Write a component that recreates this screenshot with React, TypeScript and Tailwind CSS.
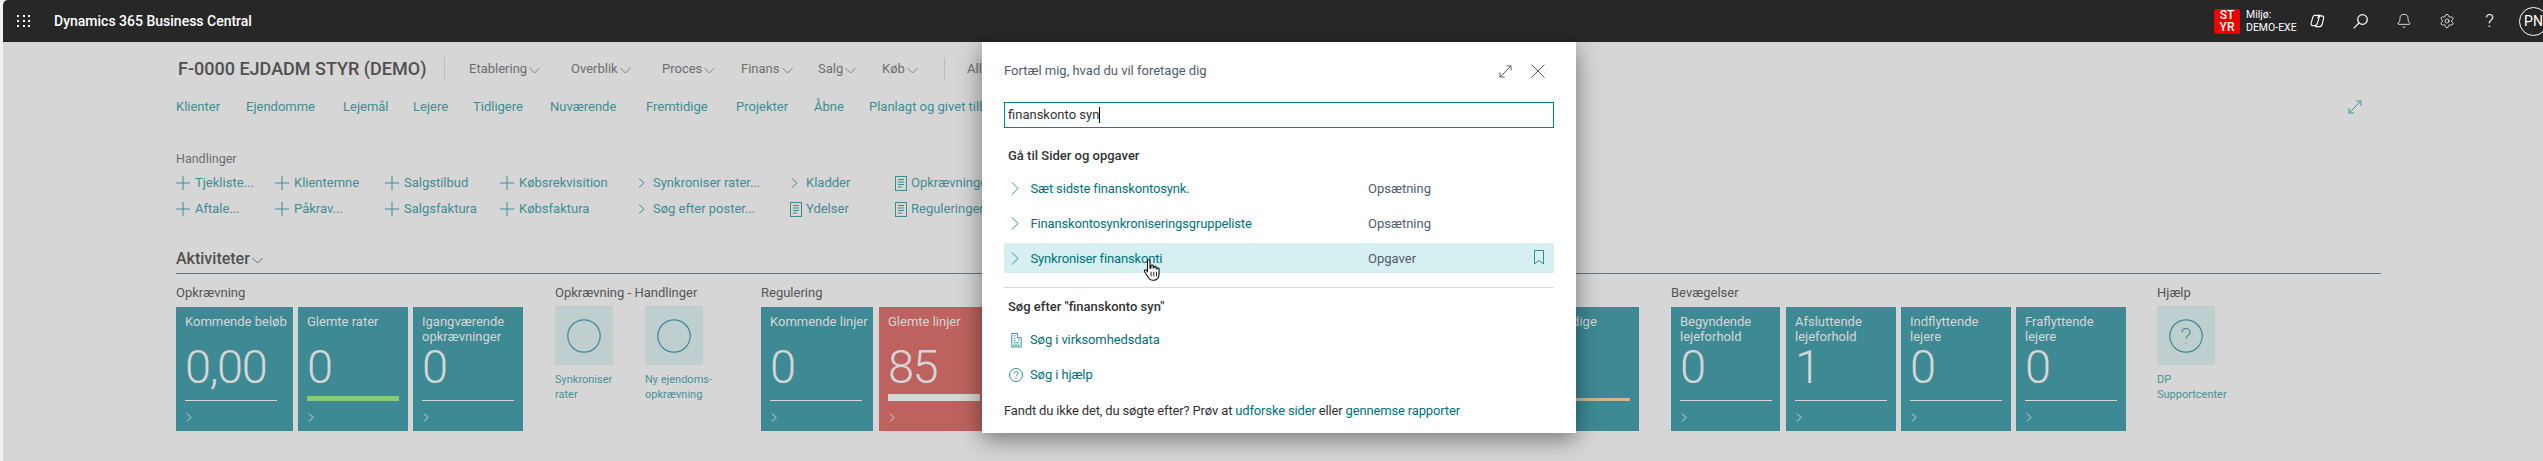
import type { ReactNode } from "react";
import { Bell, Settings } from "lucide-react";

function Chevron({ w = 7, h = 10, className = "" }: { w?: number; h?: number; className?: string }) {
  return (
    <svg width={w} height={h} viewBox={`0 0 ${w} ${h}`} fill="none" stroke="currentColor" strokeWidth="1" className={`shrink-0 ${className}`}>
      <path d={`M1 .5 ${w - 1} ${h / 2} 1 ${h - 0.5}`} />
    </svg>
  );
}

function Caret() {
  return (
    <svg width="11" height="7" viewBox="0 0 11 7" fill="none" stroke="currentColor" strokeWidth="0.8" className="ml-[2px] shrink-0 mt-[2px]">
      <path d="M.5 1 5.500 6l5-5" />
    </svg>
  );
}

function PlusIcon() {
  return (
    <svg width="14" height="14" viewBox="0 0 14 14" stroke="currentColor" strokeWidth="1" className="shrink-0 mr-[5px]">
      <path d="M0 7h14M7 0v14" />
    </svg>
  );
}

function DocIcon() {
  return (
    <svg width="12" height="15" viewBox="0 0 12 15" fill="none" stroke="currentColor" strokeWidth="1" className="shrink-0">
      <rect x=".5" y=".5" width="11" height="14" />
      <path d="M3 3.500h6M3 6h6M3 8.500h6M3 11h4" />
    </svg>
  );
}

function ExpandIcon({ size = 14 }: { size?: number }) {
  return (
    <svg width={size} height={size} viewBox="0 0 14 14" fill="none" stroke="currentColor" strokeWidth="1">
      <path d="M1 13 13 1M8 1h5v5M1 8v5h5" />
    </svg>
  );
}

const navItems = [
  ["Etablering", "w-[102px]"],
  ["Overblik", "w-[91px]"],
  ["Proces", "w-[79px]"],
  ["Finans", "w-[77px]"],
  ["Salg", "w-[64px]"],
  ["Køb", "w-[62px]"],
];

const links = [
  ["Klienter", "w-[70px]"],
  ["Ejendomme", "w-[97px]"],
  ["Lejemål", "w-[70px]"],
  ["Lejere", "w-[60px]"],
  ["Tidligere", "w-[77px]"],
  ["Nuværende", "w-[96px]"],
  ["Fremtidige", "w-[90px]"],
  ["Projekter", "w-[78px]"],
  ["Åbne", "w-[55px]"],
  ["Planlagt og givet tilbud", "w-[180px]"],
];

type ActionKind = "plus" | "chevron" | "doc";
type Action = { kind: ActionKind; label: string };

const actions: { w: string; items: Action[] }[] = [
  { w: "w-[99px]", items: [{ kind: "plus", label: "Tjekliste..." }, { kind: "plus", label: "Aftale..." }] },
  { w: "w-[110px]", items: [{ kind: "plus", label: "Klientemne" }, { kind: "plus", label: "Påkrav..." }] },
  { w: "w-[115px]", items: [{ kind: "plus", label: "Salgstilbud" }, { kind: "plus", label: "Salgsfaktura" }] },
  { w: "w-[137px]", items: [{ kind: "plus", label: "Købsrekvisition" }, { kind: "plus", label: "Købsfaktura" }] },
  { w: "w-[153px]", items: [{ kind: "chevron", label: "Synkroniser rater..." }, { kind: "chevron", label: "Søg efter poster..." }] },
  { w: "w-[105px]", items: [{ kind: "chevron", label: "Kladder" }, { kind: "doc", label: "Ydelser" }] },
  { w: "w-[120px]", items: [{ kind: "doc", label: "Opkrævninger" }, { kind: "doc", label: "Reguleringer" }] },
];

function ActionIcon({ kind }: { kind: ActionKind }) {
  if (kind === "plus") return <PlusIcon />;
  if (kind === "chevron") return <Chevron className="ml-[1px] mr-[8px]" />;
  return <span className="mr-[4px] flex"><DocIcon /></span>;
}

type TileProps = {
  title: ReactNode;
  value: string;
  w: string;
  red?: boolean;
  bar?: "line" | "green" | "white" | "tan";
};

function Tile({ title, value, w, red, bar = "line" }: TileProps) {
  return (
    <div className={`${w} h-[124px] mt-[1px] pl-[9px] shrink-0 relative ${red ? "bg-[#bd625e]" : "bg-[#3e8a94]"} text-[#d6d6d6]`}>
      <div className="pt-[7px] text-[13px] leading-[15px] h-[36px] whitespace-nowrap">{title}</div>
      <div className="absolute left-[9px] top-[30px] text-[47px] leading-[60px] font-light tracking-[-1.5px]">{value}</div>
      <div className="absolute left-[9px] w-[92px] bottom-[30px]">
        {bar === "line" && <div className="h-[1px] bg-[#d6d6d6]" />}
        {bar === "green" && <div className="h-[5px] bg-[#8cc97d]" />}
        {bar === "white" && <div className="h-[7px] bg-[#d6d6d6]" />}
        {bar === "tan" && <div className="h-[3px] bg-[#c9bb8f]" />}
      </div>
      <Chevron w={6} h={9} className="absolute left-[10px] top-[106px]" />
    </div>
  );
}

function ActionTile({ label, help }: { label: ReactNode; help?: boolean }) {
  return (
    <div className="w-[58px] shrink-0">
      <div className="h-[59px] bg-[#bfcfd0] flex items-center justify-center text-[#3e8a94]">
        <svg width="34" height="34" viewBox="0 0 34 34" fill="none" stroke="currentColor" strokeWidth="1.200">
          <circle cx="17" cy="17" r="16.200" />
          {help && <path d="M13 13.500c0-2.400 1.800-4 4-4s4 1.600 4 3.800c0 3-4 3.200-4 6.400M17 23.500v1" />}
        </svg>
      </div>
      <div className="mt-[8px] text-[11px] leading-[14.500px] text-[#4a9198] w-[80px]">{label}</div>
    </div>
  );
}

function Group({ title, children, w }: { title: string; children: ReactNode; w: string }) {
  return (
    <div className={`${w} shrink-0`}>
      <div className="h-[32px] pt-[10px] text-[13px] leading-[18px] text-[#555555] whitespace-nowrap">{title}</div>
      {children}
    </div>
  );
}

function ResultRow({ label, category, active }: { label: string; category: string; active?: boolean }) {
  return (
    <div className={`h-[30px] flex items-center pl-[7px] mt-[5px] relative ${active ? "bg-[#d6eff1]" : ""}`}>
      <Chevron w={8} h={13} className="text-[#2f8b92] mr-[11.500px]" />
      <span className="w-[337.500px] text-[#00737a] text-[13px] tracking-[-0.15px] pt-[1px]">{label}</span>
      <span className="text-[13px] text-[#505c6d] pt-[1px]">{category}</span>
      {active && (
        <svg width="10" height="15" viewBox="0 0 10 15" fill="none" stroke="#2f8b92" strokeWidth="1" className="absolute right-[10px] top-[7px]">
          <path d="M.5.500h9v13.500l-4.500-3.500-4.500 3.500z" />
        </svg>
      )}
    </div>
  );
}

function Copilot() {
  return (
    <svg width="15" height="14" viewBox="0 0 16 15" fill="none" stroke="#fff" strokeWidth="1.200">
      <path d="M5 1.500h5.500L8 9.500C7.600 11 6.600 12.500 5 12.500H3C1.500 12.500.8 11.200 1.200 9.800L3 3.500C3.400 2.200 4 1.500 5 1.500z" />
      <path d="M8 4.500C8.400 3 9.400 2 11 2h1.500c1.600 0 2.400 1.300 2 2.800L13 11c-.4 1.500-1.300 2.500-2.800 2.500H5.500" />
    </svg>
  );
}

function SearchIcon() {
  return (
    <svg width="15" height="15" viewBox="0 0 15 15" fill="none" stroke="#fff" strokeWidth="1.200">
      <circle cx="9.500" cy="5.500" r="4.800" />
      <path d="M6 9 .7 14.300" />
    </svg>
  );
}

function HandCursor() {
  return (
    <svg width="20" height="24" viewBox="0 0 17 21" className="absolute left-[139px] top-[15px]">
      <path
        d="M4.500 1.500c.9 0 1.400.6 1.400 1.400v6l.8-.2V6.600c.8-.8 1.900-.4 2 .4v1.600l.7.1V7.600c.8-.7 1.800-.3 1.900.6v1.200l.7.1V8.900c.8-.5 1.700-.1 1.800.8V14c0 3.200-2 5.500-4.800 5.500H8C6.300 19.500 5.400 18.600 4.400 17L1.200 12c-.7-1.200.7-2.200 1.600-1.200l.9 1V2.900c0-.8.1-1.400.8-1.400z"
        fill="#fff"
        stroke="#111"
        strokeWidth="1"
      />
      <path d="M6.800 12v4M9.200 12v4M11.600 12v4" stroke="#111" strokeWidth=".8" />
    </svg>
  );
}

export default function App() {
  return (
    <div className="font-['Roboto','Liberation_Sans',sans-serif] relative w-[2543px] h-[461px] overflow-hidden bg-[#f2f2f2] pl-[3px]">
      {/* top bar */}
      <div className="h-[42px] bg-[#272727] rounded-tl-[5px] flex items-center text-white">
        <div className="w-[51px] pl-[14px]">
          <div className="grid grid-cols-3 w-[14px] gap-[3px]">
            {Array.from({ length: 9 }).map((_, i) => (
              <div key={i} className="w-[2px] h-[2px] bg-white" />
            ))}
          </div>
        </div>
        <div className="text-[14px] font-medium">Dynamics 365 Business Central</div>
        <div className="ml-auto flex items-center -mr-[5px]">
          <div className="w-[26px] h-[25px] bg-[#ee0000] rounded-[2px] text-[12px] leading-[12.500px] font-medium flex items-center justify-center text-center">
            ST
            <br />
            YR
          </div>
          <div className="ml-[6px] w-[50px] text-[10.500px] leading-[13.500px] whitespace-nowrap">
            Miljø:
            <br />
            DEMO-EXE
          </div>
          <div className="w-[43px] flex justify-center"><Copilot /></div>
          <div className="w-[43px] flex justify-center"><SearchIcon /></div>
          <div className="w-[43px] flex justify-center"><Bell size={16} strokeWidth={1.2} /></div>
          <div className="w-[43px] flex justify-center"><Settings size={16} strokeWidth={1.2} /></div>
          <div className="w-[43px] flex justify-center text-[19px] font-light">?</div>
          <div className="w-[29px] h-[29px] shrink-0 rounded-full border border-white flex items-center justify-center text-[14px] ml-[8px]">PN</div>
        </div>
      </div>

      {/* page */}
      <div className="h-[419px] bg-[#d6d6d6] pl-[173px] w-[2540px]">
        <div className="w-[2205px] h-[419px]">
          <div className="h-[54px] flex items-center">
            <div className="w-[269px] pl-[2px] h-[24px] leading-[24px] text-[18px] font-medium text-[#505050] border-r border-[#bbbbbb] whitespace-nowrap">
              F-0000 EJDADM STYR (DEMO)
            </div>
            <div className="flex items-center pl-[24px] h-[24px] text-[13px] text-[#6d6d6d]">
              {navItems.map(([name, w]) => (
                <div key={name} className={`${w} flex items-center`}>
                  {name}
                  <Caret />
                </div>
              ))}
              <div className="h-[22px] w-[1px] bg-[#bbbbbb]" />
              <div className="ml-[22px]">Alle</div>
            </div>
          </div>

          <div className="h-[20px] flex items-center mt-[1px] text-[13px] text-[#3f8d93]">
            {links.map(([name, w]) => (
              <div key={name} className={`${w} whitespace-nowrap`}>{name}</div>
            ))}
            <div className="ml-auto mr-[19px] text-[#4a9198]">
              <ExpandIcon />
            </div>
          </div>

          <div className="mt-[34px] text-[12.500px] leading-[16px] text-[#6d6d6d]">Handlinger</div>
          <div className="flex mt-[6px] text-[13px] text-[#3f8d93]">
            {actions.map((col, i) => (
              <div key={i} className={`${col.w} shrink-0 flex flex-col gap-[6px] whitespace-nowrap`}>
                {col.items.map((a) => (
                  <div key={a.label} className="h-[20px] flex items-center">
                    <ActionIcon kind={a.kind} />
                    {a.label}
                  </div>
                ))}
              </div>
            ))}
          </div>

          <div className="mt-[26px] h-[29px] flex items-center text-[#505050] border-b-[1.500px] border-[#6b7382]">
            <span className="text-[16px] font-medium">Aktiviteter</span>
            <Caret />
          </div>

          <div className="flex">
            <Group title="Opkrævning" w="w-[379px]">
              <div className="flex gap-[5px]">
                <Tile w="w-[117px]" title="Kommende beløb" value="0,00" />
                <Tile w="w-[110px]" title="Glemte rater" value="0" bar="green" />
                <Tile w="w-[110px]" title={<>Igangværende<br />opkrævninger</>} value="0" />
              </div>
            </Group>
            <Group title="Opkrævning - Handlinger" w="w-[206px]">
              <div className="flex gap-[32px]">
                <ActionTile label={<>Synkroniser<br />rater</>} />
                <ActionTile label={<>Ny ejendoms-<br />opkrævning</>} />
              </div>
            </Group>
            <Group title="Regulering" w="w-[910px]">
              <div className="flex gap-[6px]">
                <Tile w="w-[112px]" title="Kommende linjer" value="0" />
                <Tile w="w-[110px]" red title="Glemte linjer" value="85" bar="white" />
                <div className="w-[528px]" />
                <Tile w="w-[110px]" title="Levendige" value="0" bar="tan" />
              </div>
            </Group>
            <Group title="Bevægelser" w="w-[486px]">
              <div className="flex gap-[5px]">
                <Tile w="w-[109px] mr-[1px]" title={<>Begyndende<br />lejeforhold</>} value="0" />
                <Tile w="w-[110px]" title={<>Afsluttende<br />lejeforhold</>} value="1" />
                <Tile w="w-[110px]" title={<>Indflyttende<br />lejere</>} value="0" />
                <Tile w="w-[110px]" title={<>Fraflyttende<br />lejere</>} value="0" />
              </div>
            </Group>
            <Group title="Hjælp" w="w-[60px]">
              <ActionTile help label={<>DP<br />Supportcenter</>} />
            </Group>
          </div>
        </div>
      </div>

      {/* dialog */}
      <div className="absolute left-[982px] top-[42px] w-[594px] h-[391px] bg-white shadow-[0_6px_22px_rgba(0,0,0,0.45)] px-[22px]">
        <div className="h-[60px] pb-[2px] flex items-center justify-between text-[#505c6d]">
          <span className="text-[13px]">Fortæl mig, hvad du vil foretage dig</span>
          <div className="flex items-center gap-[19px] pr-[9px]">
            <ExpandIcon size={13} />
            <svg width="14" height="14" viewBox="0 0 14 14" fill="none" stroke="currentColor" strokeWidth="1">
              <path d="M.5.500l13 13M13.500.500l-13 13" />
            </svg>
          </div>
        </div>
        <div className="h-[26px] border-[1.500px] border-[#00858a] flex items-center pl-[3px] text-[13px] text-[#333333]">
          finanskonto syn
          <span className="w-[1px] h-[16px] bg-black" />
        </div>
        <div className="mt-[18px] pl-[4px] text-[13px] leading-[20px] font-medium text-[#333333]">Gå til Sider og opgaver</div>
        <div className="mt-[7px]">
          <ResultRow label="Sæt sidste finanskontosynk." category="Opsætning" />
          <ResultRow label="Finanskontosynkroniseringsgruppeliste" category="Opsætning" />
          <div className="relative">
            <ResultRow label="Synkroniser finanskonti" category="Opgaver" active />
            <HandCursor />
          </div>
        </div>
        <div className="mt-[14px] border-t border-[#d8d8d8]" />
        <div className="mt-[9px] pl-[4px] text-[13px] leading-[20px] font-medium text-[#333333]">Søg efter "finanskonto syn"</div>
        <div className="mt-[13px] h-[20px] flex items-center pl-[6px] text-[13px] text-[#00737a] tracking-[-0.1px]">
          <svg width="13" height="16" viewBox="0 0 13 17" fill="none" stroke="#2f8b92" strokeWidth="1" className="mr-[7px]">
            <path d="M1.500 16V1.500h6V6h4v10zM3 14h7M3.500 4h2M3.500 6.500h2M3.500 9h2M3.500 11.500h6M8 8.500h2" />
          </svg>
          <span>Søg i virksomhedsdata</span>
        </div>
        <div className="mt-[15px] h-[20px] flex items-center pl-[5px] text-[13px] text-[#00737a] tracking-[-0.1px]">
          <svg width="14" height="14" viewBox="0 0 14 14" fill="none" stroke="#2f8b92" strokeWidth="1" className="mr-[7px]">
            <circle cx="7" cy="7" r="6.500" />
            <path d="M5 5.500c0-1.200.9-2 2-2s2 .8 2 1.900c0 1.500-2 1.600-2 3.200M7 10v1" />
          </svg>
          <span>Søg i hjælp</span>
        </div>
        <div className="mt-[16px] text-[13px] text-[#333333] whitespace-nowrap tracking-[-0.16px]">
          Fandt du ikke det, du søgte efter? Prøv at <span className="text-[#00737a]">udforske sider</span> eller <span className="text-[#00737a]">gennemse rapporter</span>
        </div>
      </div>
    </div>
  );
}
